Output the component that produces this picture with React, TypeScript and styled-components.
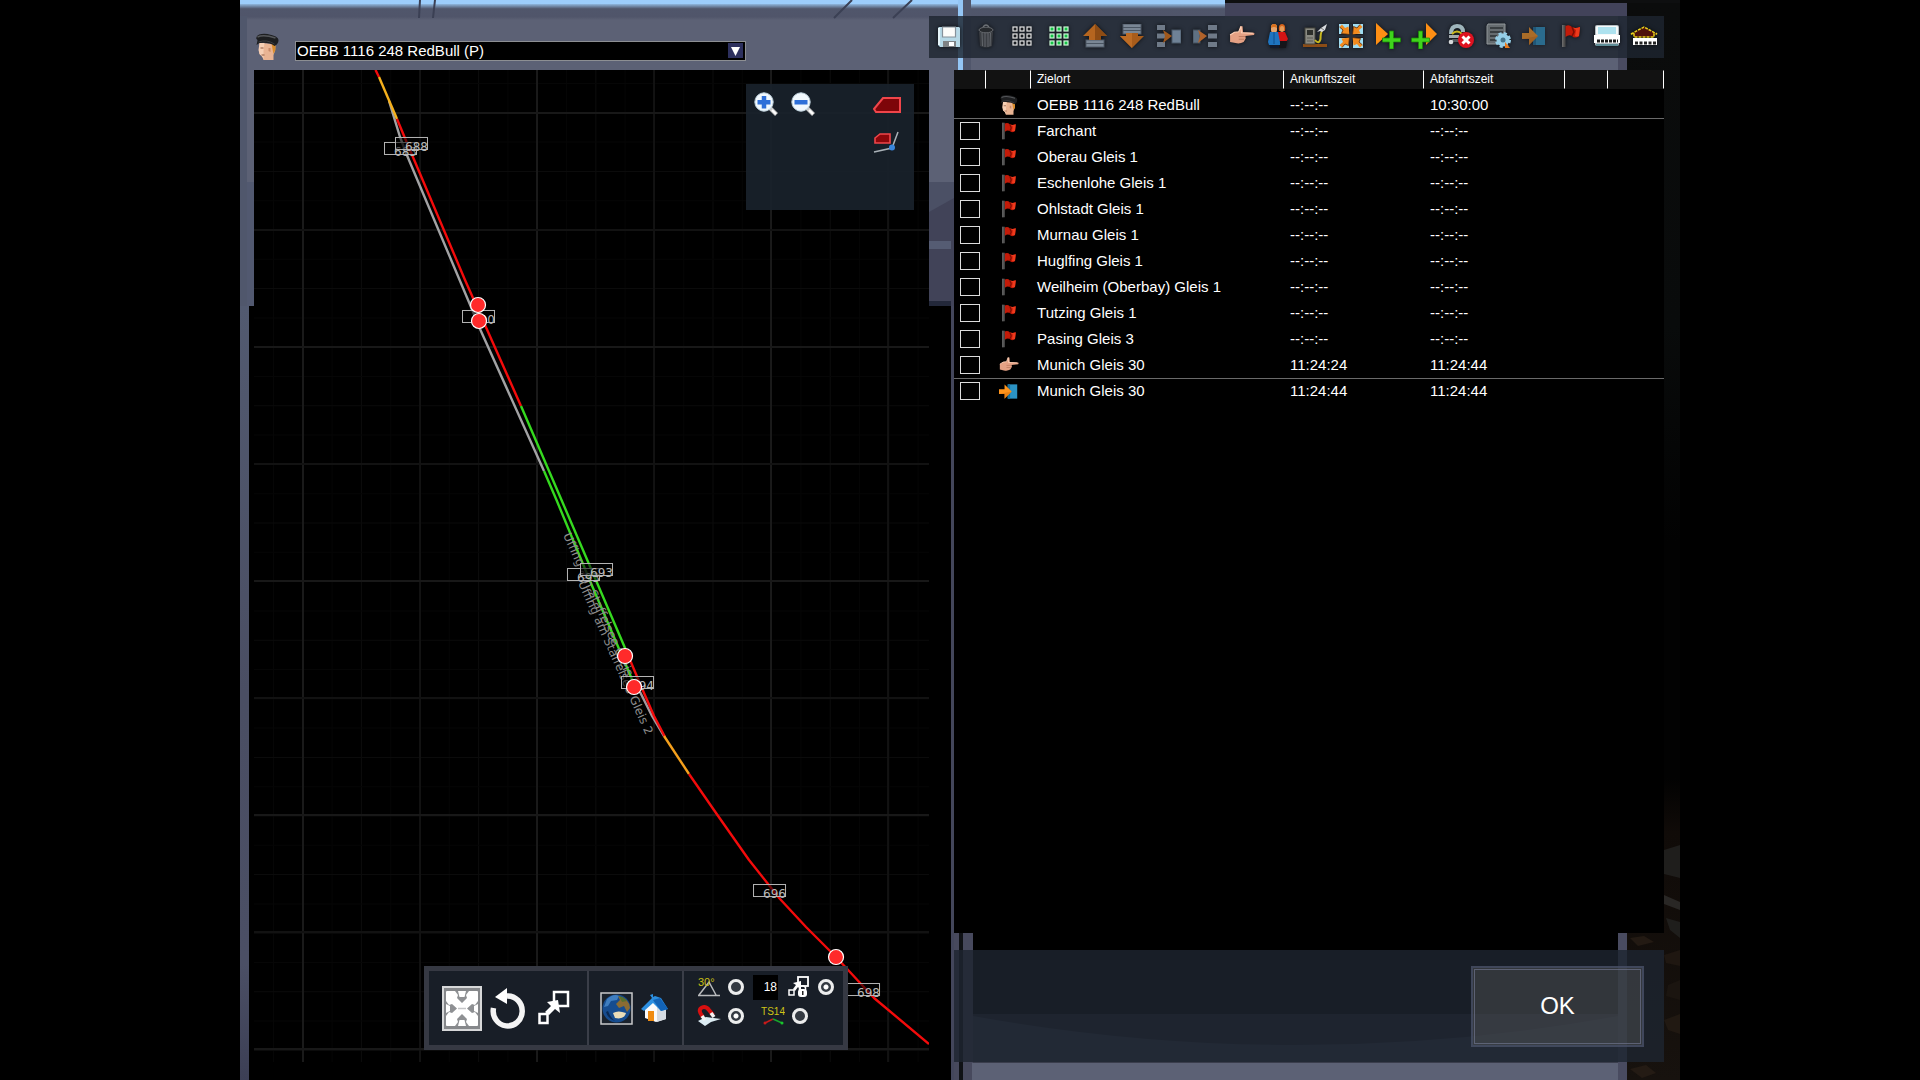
import React, { useState } from "react";
import styled, { createGlobalStyle, css } from "styled-components";

const sans = `"Liberation Sans", Arial, sans-serif`;
const glass = "rgba(29, 37, 48, 0.815)";

const GlobalStyle = createGlobalStyle`
  *, *::before, *::after { box-sizing: border-box; }
  html, body { margin: 0; padding: 0; background: #000; }
  body { font-family: ${sans}; color: #fff; }
  button, input, select { font: inherit; color: inherit; margin: 0; }
`;

/* ---------- shell ---------- */

const Page = styled.div`
  min-height: 100vh;
  display: grid;
  grid-template-columns: 1fr 6fr 1fr;
  background: #000;
`;

const Stage = styled.main`
  grid-column: 2;
  position: relative;
  isolation: isolate;
  display: grid;
  grid-template-columns: minmax(0, 15fr) minmax(0, 16fr);
  padding-right: 16px;
`;

const Backdrop = styled.svg`
  position: absolute;
  inset: 0;
  z-index: -1;
  width: 100%;
  height: 100%;
`;

const MapColumn = styled.section`
  display: flex;
  flex-direction: column;
  padding: 0 0 18px 14px;
`;

const PlanColumn = styled.section`
  display: flex;
  flex-direction: column;
  padding: 16px 0 18px;
`;

/* ---------- service picker ---------- */

const PickerBar = styled.header`
  height: 70px;
  display: flex;
  align-items: flex-end;
  gap: 14px;
  padding-bottom: 9px;
`;

const PickerBox = styled.label`
  flex: 0 1 451px;
  position: relative;
  display: block;
`;

const Picker = styled.select`
  appearance: none;
  display: block;
  width: 100%;
  height: 20px;
  padding: 0 20px 0 1px;
  border: 1px solid #8d8f93;
  border-radius: 0;
  background: #000;
  font-size: 15px;
  line-height: 18px;
`;

const PickerArrow = styled.svg`
  position: absolute;
  top: 2px;
  right: 3px;
  width: 15px;
  height: 15px;
  pointer-events: none;
`;

/* ---------- map ---------- */

const MapFrame = styled.div`
  position: relative;
  flex: 1;
  min-height: 480px;
  background: #000;
  overflow: hidden;
`;

const MapCanvas = styled.svg`
  position: absolute;
  inset: 0;
  width: 100%;
  height: 100%;
`;

const bareButton = css`
  display: grid;
  place-items: center;
  padding: 0;
  border: 0;
  background: none;
  cursor: pointer;
`;

const ZoomPanel = styled.div`
  position: absolute;
  top: 14px;
  right: 15px;
  width: 168px;
  height: 126px;
  display: flex;
  justify-content: space-between;
  padding: 6px 12px 5px 5px;
  background: rgba(26, 34, 44, 0.9);
`;

const ZoomGroup = styled.div<{ $vertical?: boolean }>`
  display: flex;
  flex-direction: ${(p) => (p.$vertical ? "column" : "row")};
  gap: 7px;
`;

const ZoomButton = styled.button`
  ${bareButton}
  width: 30px;
  height: 30px;
`;

const ToolPanel = styled.div`
  position: absolute;
  right: 12%;
  bottom: 12px;
  display: flex;
  height: 84px;
  border: 5px solid #363943;
  background: #181e27;
`;

const ToolSection = styled.div<{ $width: number; $gap: number }>`
  width: ${(p) => p.$width}px;
  display: flex;
  align-items: center;
  justify-content: center;
  gap: ${(p) => p.$gap}px;

  & + & {
    border-left: 2px solid #3a3e48;
  }
`;

const ToolButton = styled.button<{ $size: "large" | "small" }>`
  ${bareButton}
  width: ${(p) => (p.$size === "large" ? 40 : 33)}px;
  height: ${(p) => (p.$size === "large" ? 45 : 33)}px;
`;

const SnapSection = styled.div`
  width: 161px;
  display: flex;
  flex-direction: column;
  gap: 3px;
  padding: 3px 0 0 13px;
  border-left: 2px solid #3a3e48;
`;

const SnapRow = styled.div<{ $gap: number }>`
  display: flex;
  align-items: center;
  gap: ${(p) => p.$gap}px;
  height: 26px;
`;

const SnapOption = styled.label`
  display: flex;
  align-items: center;
  gap: 7px;
`;

const RoundToggle = styled.input`
  appearance: none;
  width: 16px;
  height: 16px;
  border: 3px solid #eceded;
  border-radius: 50%;
  background: #343a42;

  &:checked {
    background: radial-gradient(circle, #fff 0 2px, #343a42 3px);
  }
`;

const AngleField = styled.input`
  width: 25px;
  height: 25px;
  padding: 0 1px;
  border: 0;
  background: #000;
  font-size: 12px;
  text-align: right;
`;

/* ---------- timetable ---------- */

const ActionBar = styled.div`
  display: grid;
  grid-template-columns: repeat(20, 1fr);
  align-items: center;
  height: 42px;
  padding: 0 2px 2px;
  margin-bottom: 12px;
  background: ${glass};
`;

const ActionButton = styled.button<{ $dim?: boolean }>`
  ${bareButton}
  width: 100%;
  height: 28px;
  filter: drop-shadow(0 0 2px rgba(0, 0, 0, 0.7));
  opacity: ${(p) => (p.$dim ? 0.6 : 1)};
`;

const TimetablePane = styled.div`
  flex: 1;
  margin-left: 25px;
  background: #000;
`;

const Timetable = styled.table`
  width: 100%;
  table-layout: fixed;
  border-collapse: separate;
  border-spacing: 0;
  font-size: 15px;
`;

const HeadCell = styled.th`
  height: 19px;
  padding: 0 0 0 6px;
  border-right: 1px solid #fff;
  border-top: 1px solid #121212;
  border-bottom: 1px solid #121212;
  background: #121212;
  font-size: 12px;
  line-height: 17px;
  font-weight: 400;
  text-align: left;
`;

const Cell = styled.td`
  padding: 0 0 0 6px;
  line-height: 22px;
  white-space: nowrap;
`;

const IconCell = styled.td`
  padding: 0;
  text-align: center;
  line-height: 0;
`;

const StopRow = styled.tr<{ $ruled?: boolean; $lead?: boolean }>`
  height: ${(p) => (p.$lead ? 30 : 26)}px;

  & > td {
    border-bottom: ${(p) => (p.$ruled ? "1px solid #6a6a6a" : "0")};
    padding-top: ${(p) => (p.$lead ? 2 : 0)}px;
    padding-bottom: ${(p) => (p.$lead ? 0 : 2)}px;
  }
`;

const StopCheck = styled.input`
  appearance: none;
  display: block;
  width: 20px;
  height: 18px;
  border: 1px solid #dcdcdc;
  background: #000;

  &:checked {
    background: #d8d8d8;
  }
`;

const Footer = styled.footer`
  display: flex;
  align-items: center;
  justify-content: flex-end;
  height: 112px;
  margin: 17px 0 0 25px;
  padding-right: 20px;
  background: ${glass};
`;

const OkButton = styled.button`
  width: 173px;
  height: 81px;
  padding: 0;
  border: 2px solid rgba(70, 78, 104, 0.7);
  outline: 1px solid rgba(110, 116, 140, 0.7);
  outline-offset: -4px;
  background: rgba(96, 96, 98, 0.36);
  font-size: 24px;
  cursor: pointer;
`;

/* ---------- icons ---------- */

type IconProps = { size?: number; w?: number; h?: number; box?: string; children: React.ReactNode };
const Svg = ({ size = 24, w, h, box = "0 0 24 24", children }: IconProps) => (
  <svg width={w ?? size} height={h ?? size} viewBox={box} aria-hidden="true">
    {children}
  </svg>
);

const DriverIcon = ({ w, h }: { w: number; h: number }) => (
  <Svg w={w} h={h} box="0 0 24 28">
    <path d="M4 10 L20 11 L19.500 18 L18 22 L18 27 L8 27 L7 24 L4 21 Z" fill="#e9b493" />
    <path d="M4 10 L9 10 L8 18 L8 27 L7 24 L4 21 L3 17 Z" fill="#f6cfb4" />
    <path d="M16 10 L20 10 L20 17 L18 21 L17 16 Z" fill="#d98d2c" />
    <path d="M13 15 L15 15 L15 19 L13 18 Z" fill="#c98a68" />
    <path d="M5 15 H8 M6 22 H9" stroke="#8f5b42" strokeWidth="1" />
    <path d="M1 4 Q3 0 12 1 Q23 3 23 7 Q23 11 19 13 Q14 9 4 10 L1 12 Q2 8 2 7 Q0 6 1 4 Z" fill="#1d1e20" />
    <path d="M2 4 Q8 1 20 5" stroke="#55575a" strokeWidth="1.500" fill="none" />
    <path d="M3 9 Q11 6 19 11" stroke="#3c3e41" strokeWidth="1" fill="none" />
  </Svg>
);

const FlagIcon = ({ size = 24 }: { size?: number }) => (
  <Svg size={size}>
    <rect x="3" y="1" width="3.500" height="22" fill="#4b4b4b" />
    <rect x="3" y="1" width="1.500" height="22" fill="#696969" />
    <path d="M6.500 2 Q10 0 13 3 Q16 5 21 3 L20 12 Q16 15 13 12 Q10 10 6.500 13 Z" fill="#c41a08" />
    <path d="M13 3 Q16 5 21 3 L20 12 Q18 13 16 12 L17 6 Z" fill="#ee3a1c" />
    <path d="M13 3 L15 8 L13 12" stroke="#7c0e04" strokeWidth="1.500" fill="none" />
  </Svg>
);

const HandIcon = ({ size = 26 }: { size?: number }) => (
  <Svg size={size}>
    <path d="M1 11 L5 8.500 L9 8 L11 3 L12.500 3 L13 8.500 L23 9 Q24 10 23 11 L15 12 L15.500 14 L14.500 16 L13.500 17.500 Q10 19.500 6 18.500 L1 17.500 Z" fill="#e5a184" />
    <path d="M1 11 L5 8.500 L9 8 L11 3 L11.500 9 L22 9.500" stroke="#ffd2b8" strokeWidth="1" fill="none" />
    <path d="M9 12.500 H15 M9 15 H14" stroke="#b8765b" strokeWidth="0.800" />
  </Svg>
);

const ExitIcon = ({ size = 24 }: { size?: number }) => (
  <Svg size={size}>
    <rect x="11" y="3" width="12" height="18" fill="#2b93c4" />
    <rect x="11" y="3" width="3" height="18" fill="#1b6e9b" />
    <path d="M0 9 H7 V3 L16 12 L7 21 V15 H0 Z" fill="#ff941c" />
    <path d="M0 15 H7 V21 L16 12" fill="#d9700a" opacity="0.500" />
  </Svg>
);

const SaveIcon = () => (
  <Svg>
    <path d="M2 3 H22 L23 4 V23 H3 L1 21 V4 Z" fill="#b6d8e6" />
    <path d="M5.500 3 H18.500 V13 H5.500 Z" fill="#fcfcfa" stroke="#86919a" strokeWidth="1.200" />
    <rect x="1" y="4" width="2" height="17" fill="#e6f5fa" />
    <rect x="6" y="17" width="13" height="6" fill="#7f8284" />
    <rect x="12" y="18" width="5" height="4" fill="#fff" />
  </Svg>
);

const TrashIcon = () => (
  <Svg>
    <path d="M5 8 H19 L18 22 Q12 25 6 22 Z" fill="#3a3d42" />
    <path d="M8 9 L8.500 22 M11 9 V23 M14 9 V23 M16.500 9 L16 22" stroke="#63676c" strokeWidth="1" />
    <ellipse cx="12" cy="6" rx="7" ry="2.800" fill="#26292d" stroke="#66696e" strokeWidth="1" />
    <path d="M9 3 Q12 -1 15 3" stroke="#6d7176" strokeWidth="1.300" fill="none" />
  </Svg>
);

const GridIcon = ({ green }: { green?: boolean }) => (
  <Svg>
    {[3, 10, 17].map((y) =>
      [3, 10, 17].map((x) => (
        <rect
          key={`${x}-${y}`}
          x={x}
          y={y}
          width="4"
          height="4"
          fill={green ? "#15c445" : "#1a1d21"}
          stroke={green ? "#cdf7d8" : "#e5e5e5"}
          strokeWidth="1.200"
        />
      ))
    )}
  </Svg>
);

const MoveUpIcon = () => (
  <Svg>
    <rect x="3" y="16" width="18" height="7" fill="#7a8694" stroke="#505b68" />
    <path d="M3 19.500 H21" stroke="#4a5562" />
    <path d="M12 0 L24 12 H18 V16 H6 V12 H0 Z" fill="#b5651f" />
    <path d="M12 0 L24 12 H18 V16 H12 Z" fill="#8e4c14" />
  </Svg>
);

const MoveDownIcon = () => (
  <Svg>
    <rect x="3" y="0" width="18" height="10" fill="#7a8694" stroke="#505b68" />
    <path d="M3 3.500 H21 M3 6.500 H21" stroke="#4a5562" />
    <path d="M12 24 L24 12 H18 V9 H6 V12 H0 Z" fill="#a85c1b" />
    <path d="M12 24 L0 12 H6 V9 H12 Z" fill="#bd6c25" />
  </Svg>
);

const MergeIcon = () => (
  <Svg>
    {[1, 9.5, 18].map((y) => (
      <rect key={y} x="0" y={y} width="8" height="5" fill="#6f7a88" />
    ))}
    <rect x="15" y="6" width="9" height="13" fill="#6f8296" stroke="#4d5b6a" />
    <path d="M6 6 L15 12 L6 19 L8 12 Z" fill="#a0581c" />
  </Svg>
);

const SplitIcon = () => (
  <Svg>
    {[1, 9.5, 18].map((y) => (
      <rect key={y} x="15" y={y} width="9" height="5" fill="#6f7a88" />
    ))}
    <rect x="0" y="6" width="7" height="13" fill="#5f7183" stroke="#46525f" />
    <path d="M5 6 L14 12 L5 19 L7 12 Z" fill="#b0622a" />
  </Svg>
);

const PassengersIcon = () => (
  <Svg>
    <path d="M13 7 Q12 0 16 0 Q20 0 19 7 Z" fill="#d8641a" />
    <rect x="14" y="2" width="4" height="6" rx="2" fill="#e59c5a" />
    <path d="M12 8 H19 L22 15 L20 18 H12 Z" fill="#d21414" />
    <path d="M13 17 H21 L20 24 H13 Z" fill="#15151a" />
    <rect x="5" y="0" width="6" height="9" rx="3" fill="#e5a46c" />
    <path d="M5 4 Q5 0 8 0 Q11 0 11 4 Q8 2 5 4 Z" fill="#d9701c" />
    <path d="M4 8 H12 L14 18 V21 H3 L2 18 Z" fill="#1e74c0" />
    <path d="M8 8 V20" stroke="#0f4d8c" />
    <path d="M4 21 H13 V24 H4 Z" fill="#111a2e" />
  </Svg>
);

const FuelIcon = () => (
  <Svg w={26}>
    <rect x="0" y="20" width="24" height="3" fill="#8b4c16" />
    <rect x="2" y="4" width="10" height="16" fill="#8a8a82" stroke="#46463f" />
    <rect x="4" y="6" width="6" height="5" fill="#2d2f2b" />
    <path d="M4 14 H10 M4 17 H10" stroke="#5b5b54" />
    <path d="M12 16 Q16 21 17.500 15 Q17.500 9 19 7" stroke="#c8b820" strokeWidth="2" fill="none" />
    <path d="M14 8 L18 4 L24 0 L22 6 L19 8 L17 7 Z" fill="#d9dcdf" />
    <path d="M18 4 L21 6" stroke="#777" fill="none" />
  </Svg>
);

const ConvergeIcon = () => (
  <Svg>
    {[0, 90, 180, 270].map((r) => (
      <g key={r} transform={`rotate(${r} 12 12)`}>
        <rect x="0" y="0" width="10" height="10" fill="#9fdcf2" />
        <path d="M0.500 3 L3 0.500 L6 4 L9.500 2.500 L10.500 10.500 L2.500 9.500 L4 6 Z" fill="#f28a1e" />
        <path d="M10.500 10.500 L2.500 9.500 L4 6 L0.500 3" stroke="#6e3608" strokeWidth="0.900" fill="none" />
      </g>
    ))}
    <path d="M12 0 V24 M0 12 H24" stroke="#2a2f38" strokeWidth="2.500" />
  </Svg>
);

const Plus = ({ x, y }: { x: number; y: number }) => (
  <path d={`M${x - 2} ${y - 9} h4 v7 h7 v4 h-7 v7 h-4 v-7 h-7 v-4 h7 Z`} fill="#3fd41c" stroke="#1d8a0b" strokeWidth="0.800" />
);

const AddAfterIcon = () => (
  <Svg w={26} h={26} box="0 0 26 26">
    <path d="M1 0 L13 11 L1 22 Z" fill="#ff8f14" />
    <Plus x={16.5} y={17} />
  </Svg>
);

const AddBeforeIcon = () => (
  <Svg w={26} h={26} box="0 0 26 26">
    <path d="M15 0 L26 11 L15 22 Z" fill="#ff8f14" />
    <Plus x={9.5} y={17} />
  </Svg>
);

const UncoupleIcon = () => (
  <Svg w={26} h={26} box="0 0 26 26">
    <path d="M3 11 Q3 3 9 3 Q15 3 15 9" stroke="#9eb4bb" strokeWidth="4" fill="none" />
    <path d="M4 11 Q9 6 14 11" stroke="#c9b51e" strokeWidth="2" fill="none" />
    <rect x="1" y="12" width="10" height="3" fill="#a3a9ad" />
    <rect x="4" y="16" width="7" height="3" fill="#54595e" />
    <circle cx="3" cy="19" r="2.300" fill="#d6d9db" />
    <circle cx="18" cy="17" r="8" fill="#de1220" />
    <path d="M14.500 13.500 L21.500 20.500 M21.500 13.500 L14.500 20.500" stroke="#fff" strokeWidth="3" />
  </Svg>
);

const SettingsIcon = () => (
  <Svg w={26} h={26} box="0 0 26 26">
    <path d="M3 1 H20 V21 H2 V3 Z" fill="#666c70" stroke="#92989b" />
    <path d="M5 5 H18 M5 9 H18 M5 13 H12 M5 17 H12" stroke="#2c3033" strokeWidth="1.500" />
    <circle cx="18" cy="17" r="6.500" fill="#95cfe8" stroke="#95cfe8" strokeWidth="3" strokeDasharray="3 2.100" />
    <circle cx="18" cy="17" r="2.500" fill="#45758b" />
    <path d="M20 19 L25 25 H20 Z" fill="#ed7b1a" />
  </Svg>
);

const TrainIcon = () => (
  <Svg w={26} h={24} box="0 0 26 24">
    <rect x="1" y="1" width="24" height="21" rx="2" fill="#b5bec3" />
    <rect x="2" y="2" width="22" height="9" rx="1" fill="#f6f9fa" />
    <rect x="4" y="3" width="18" height="7" fill="#aee2ef" />
    <rect x="0" y="11" width="26" height="8" fill="#fff" />
    <path d="M3 17 H24" stroke="#1c1c1c" strokeWidth="3" strokeDasharray="3 1" />
    <rect x="2" y="20" width="22" height="2" fill="#5f8d97" />
  </Svg>
);

const DepotIcon = () => (
  <Svg w={28} h={24} box="0 0 28 24">
    <path d="M1 10 L14 3 L27 10 H24 V13 H4 V10 Z" fill="#4f110b" stroke="#e9cf1b" strokeWidth="1.500" strokeDasharray="3 1" />
    <rect x="3" y="14" width="24" height="7" fill="#fff" />
    <path d="M5 19 H26" stroke="#222" strokeWidth="3" strokeDasharray="3 1.500" />
  </Svg>
);

const Magnifier = ({ plus }: { plus?: boolean }) => (
  <Svg size={26} box="0 0 26 26">
    <path d="M17 16 L23.500 22.500" stroke="#c8c8c8" strokeWidth="4" />
    <path d="M19 18 L23 22" stroke="#fff" strokeWidth="2" />
    <circle cx="11" cy="10" r="9.200" fill="#f1f8fd" stroke="#bdd0dc" strokeWidth="1" />
    <rect x="4.500" y="8" width="13" height="4.500" fill="#2e6fd8" />
    {plus && <rect x="8.750" y="4" width="4.500" height="12.500" fill="#2e6fd8" />}
  </Svg>
);

const LocoIcon = () => (
  <Svg w={28} h={18} box="0 0 28 18">
    <path d="M1 13 L10 2 H27 V16 H3 Z" fill="#7d0509" stroke="#f0454a" strokeWidth="2" />
  </Svg>
);

const LocoNodeIcon = () => (
  <Svg w={28} h={24} box="0 0 28 24">
    <path d="M2 8 L7 4 H17 V13 H2 Z" fill="#8c060a" stroke="#f0454a" strokeWidth="1.600" />
    <path d="M1 22 L19 18 L25 2" stroke="#aab2b8" strokeWidth="1.500" fill="none" />
    <circle cx="19" cy="17.500" r="3" fill="#3a86dc" />
  </Svg>
);

const PanIcon = () => (
  <Svg w={40} h={45} box="0 0 40 45">
    <rect x="1" y="1" width="38" height="43" fill="#86888b" stroke="#d7d8d9" strokeWidth="2" />
    <rect x="4" y="5" width="32" height="35" rx="1" fill="#fff" />
    <g fill="#8e9093">
      <path d="M20 5 L13 5 L16 9 L15 12 L20 17 L25 12 L24 9 L27 5 Z" />
      <path d="M20 40 L13 40 L16 36 L15 33 L20 28 L25 33 L24 36 L27 40 Z" />
      <path d="M4 15 L7 19 L10 18 L15 22.500 L10 27 L7 26 L4 30 Z" />
      <path d="M36 15 L33 19 L30 18 L25 22.500 L30 27 L33 26 L36 30 Z" />
    </g>
    <path d="M16 5 L17.500 11 H22.500 L24 5 M16 40 L17.500 34 H22.500 L24 40" fill="#fff" />
    <path d="M4 18 L8 20 V25 L4 27 Z M36 18 L32 20 V25 L36 27 Z" fill="#fff" />
    <path d="M16 22.500 H24" stroke="#c5c6c8" strokeWidth="1.500" />
  </Svg>
);

const RotateIcon = () => (
  <Svg w={36} h={42} box="0 0 36 42">
    <path d="M3.500 21 A14.500 15 0 1 0 17 9" stroke="#f4f4f4" strokeWidth="5.500" fill="none" />
    <path d="M17 1 V17 L5 10 Z" fill="#fff" />
  </Svg>
);

const ScaleIcon = () => (
  <Svg w={32} h={36} box="0 0 32 36">
    <rect x="16" y="2" width="14" height="14" fill="none" stroke="#fff" strokeWidth="2.500" />
    <rect x="1.500" y="24" width="8" height="9" fill="none" stroke="#fff" strokeWidth="2.500" />
    <path d="M7 22 L13 16 L9 12 L20 10 L22 23 L17 19 L11 25 Z" fill="#fff" />
  </Svg>
);

const GlobeIcon = () => (
  <Svg size={33} box="0 0 33 33">
    <rect x="1" y="1" width="31" height="31" fill="#1a222c" stroke="#c8c9ca" strokeWidth="1.500" />
    <circle cx="16.500" cy="16.500" r="14" fill="#164c8f" />
    <path d="M7 7 Q14 1 19 4 L17 8 L11 9 L8 14 L4 15 Z" fill="#3f7ec0" />
    <path d="M18 4 Q29 6 30 16 L27 20 L24 14 L19 16 L16 12 L20 8 Z" fill="#8b6c33" />
    <path d="M19 4 Q24 5 27 9 L22 10 Z" fill="#57702f" />
    <path d="M13 21 Q18 18 26 21 Q24 28 15 26 Z" fill="#e9dcb8" />
    <path d="M6 20 Q8 27 15 29 Q10 25 8 19 Z" fill="#0a2a55" />
  </Svg>
);

const HouseIcon = () => (
  <Svg size={28} box="0 0 28 28">
    <path d="M4 13 L12 5 L25 14 V25 L15 28 L4 24 Z" fill="#fbfbfb" />
    <path d="M16 13 L25 13 V25 L16 28 Z" fill="#d5dbe2" />
    <rect x="7" y="17" width="6" height="10" fill="#f08c12" />
    <path d="M0 15 L11 4 L9 1 L12 0 V3 L14 2 L20 4 L27 15 L20 17 L12 9 L3 17 Z" fill="#2c8fe0" />
    <path d="M12 6 L20 17 L27 15 L19 4 Z" fill="#1263b6" />
  </Svg>
);

const AngleIcon = () => (
  <Svg w={24} h={22} box="0 0 24 22">
    <path d="M2 19 L12 6 L19 19 M1 19.500 H23" stroke="#b9bbbd" strokeWidth="1.500" fill="none" />
    <text x="1" y="10" fontFamily={sans} fontSize="11" fill="#c9bf15">30°</text>
  </Svg>
);

const MagnetIcon = () => (
  <Svg w={24} h={22} box="0 0 24 22">
    <path d="M1 16 L9 12 L24 14 L14 17 L8 21 Z" fill="#dcecf3" />
    <path d="M6 12 Q0 5 5 2.500 Q9 1 12 5 L16 10" stroke="#d81010" strokeWidth="4" fill="none" />
    <path d="M5 11 L8 15 M14 8 L17 12" stroke="#f3f3f3" strokeWidth="3.500" />
  </Svg>
);

const ScaleLockIcon = () => (
  <Svg w={24} h={24} box="0 0 24 24">
    <rect x="11" y="2" width="10" height="9" fill="none" stroke="#fff" strokeWidth="1.800" />
    <rect x="2" y="15" width="5" height="5" fill="none" stroke="#fff" strokeWidth="1.500" />
    <path d="M6 14 L9 10 L6 8 L14 6 L14 15 L11 12 L8 16 Z" fill="#fff" />
    <path d="M12.500 15 V12.500 Q15.500 9 18.500 12.500 V15" stroke="#fff" strokeWidth="1.500" fill="none" />
    <rect x="11" y="14" width="9" height="8" rx="3" fill="#fff" />
    <rect x="15" y="16" width="1.500" height="4" fill="#222" />
  </Svg>
);

const TrackToolIcon = () => (
  <Svg w={24} h={24} box="0 0 24 24">
    <text x="12" y="11" textAnchor="middle" fontFamily={sans} fontSize="10" fill="#cfc316">TS14</text>
    <path d="M12 15 L4 19" stroke="#c81a1a" strokeWidth="1.500" />
    <path d="M12 15 L21 19" stroke="#18a52c" strokeWidth="1.500" />
    <circle cx="4" cy="19" r="1.500" fill="#c81a1a" />
    <circle cx="21" cy="19" r="1.500" fill="#18c52c" />
  </Svg>
);

/* ---------- data ---------- */

const actions: { label: string; icon: React.ReactNode; dim?: boolean }[] = [
  { label: "Speichern", icon: <SaveIcon /> },
  { label: "Löschen", icon: <TrashIcon /> },
  { label: "Alle abwählen", icon: <GridIcon /> },
  { label: "Alle auswählen", icon: <GridIcon green /> },
  { label: "Nach oben", icon: <MoveUpIcon /> },
  { label: "Nach unten", icon: <MoveDownIcon /> },
  { label: "Zusammenführen", icon: <MergeIcon /> },
  { label: "Trennen", icon: <SplitIcon /> },
  { label: "Halt", icon: <HandIcon /> },
  { label: "Fahrgäste", icon: <PassengersIcon /> },
  { label: "Tanken", icon: <FuelIcon /> },
  { label: "Kuppeln", icon: <ConvergeIcon /> },
  { label: "Danach einfügen", icon: <AddAfterIcon /> },
  { label: "Davor einfügen", icon: <AddBeforeIcon /> },
  { label: "Abkuppeln", icon: <UncoupleIcon /> },
  { label: "Einstellungen", icon: <SettingsIcon /> },
  { label: "Endziel", icon: <ExitIcon />, dim: true },
  { label: "Wegpunkt", icon: <FlagIcon /> },
  { label: "Zug", icon: <TrainIcon /> },
  { label: "Depot", icon: <DepotIcon /> },
];

const NONE = "--:--:--";
type Kind = "driver" | "flag" | "hand" | "exit";
const stops: { kind: Kind; name: string; arrive: string; depart: string; ruled?: boolean }[] = [
  { kind: "driver", name: "OEBB 1116 248 RedBull", arrive: NONE, depart: "10:30:00", ruled: true },
  { kind: "flag", name: "Farchant", arrive: NONE, depart: NONE },
  { kind: "flag", name: "Oberau Gleis 1", arrive: NONE, depart: NONE },
  { kind: "flag", name: "Eschenlohe Gleis 1", arrive: NONE, depart: NONE },
  { kind: "flag", name: "Ohlstadt Gleis 1", arrive: NONE, depart: NONE },
  { kind: "flag", name: "Murnau Gleis 1", arrive: NONE, depart: NONE },
  { kind: "flag", name: "Huglfing Gleis 1", arrive: NONE, depart: NONE },
  { kind: "flag", name: "Weilheim (Oberbay) Gleis 1", arrive: NONE, depart: NONE },
  { kind: "flag", name: "Tutzing Gleis 1", arrive: NONE, depart: NONE },
  { kind: "flag", name: "Pasing Gleis 3", arrive: NONE, depart: NONE },
  { kind: "hand", name: "Munich Gleis 30", arrive: "11:24:24", depart: "11:24:44", ruled: true },
  { kind: "exit", name: "Munich Gleis 30", arrive: "11:24:44", depart: "11:24:44" },
];

const stopIcon: Record<Kind, React.ReactNode> = {
  driver: <DriverIcon w={18} h={22} />,
  flag: <FlagIcon size={18} />,
  hand: <HandIcon size={20} />,
  exit: <ExitIcon size={19} />,
};

const signs = [
  { x: 384, y: 142, n: "683" },
  { x: 395, y: 137, n: "688" },
  { x: 462, y: 310, n: "690" },
  { x: 567, y: 568, n: "693" },
  { x: 580, y: 563, n: "693" },
  { x: 621, y: 676, n: "694" },
  { x: 753, y: 884, n: "696" },
  { x: 847, y: 983, n: "698" },
];

const signals = [
  [478, 305],
  [479, 321],
  [625, 656],
  [634, 687],
  [836, 957],
];

const range = (n: number) => Array.from({ length: n }, (_, i) => i);

/* ---------- drawings ---------- */

const Scene = () => (
  <Backdrop viewBox="0 0 1440 1080" preserveAspectRatio="none" aria-hidden="true">
    <defs>
      <linearGradient id="beam" x1="0" y1="0" x2="0" y2="1">
        <stop offset="0" stopColor="#8fb8e0" />
        <stop offset="0.300" stopColor="#50566b" />
        <stop offset="0.800" stopColor="#50556a" />
        <stop offset="1" stopColor="#5c6175" />
      </linearGradient>
      <linearGradient id="post" x1="0" y1="0" x2="0" y2="1">
        <stop offset="0" stopColor="#525a70" />
        <stop offset="0.500" stopColor="#4a4e63" />
        <stop offset="0.850" stopColor="#4b4f65" />
        <stop offset="1" stopColor="#3c3f55" />
      </linearGradient>
      <linearGradient id="night" x1="0" y1="0" x2="0" y2="1">
        <stop offset="0" stopColor="#0b0c0c" />
        <stop offset="0.300" stopColor="#090b0b" />
        <stop offset="0.500" stopColor="#020202" />
        <stop offset="0.720" stopColor="#020202" />
        <stop offset="0.770" stopColor="#100b08" />
        <stop offset="1" stopColor="#17120e" />
      </linearGradient>
    </defs>
    <rect width="1440" height="1080" fill="#5c6175" />
    <rect width="1440" height="4" fill="#9ccdfb" />
    <rect y="4" width="985" height="16" fill="url(#beam)" />
    <path d="M985 0 H1387 V16 H985 Z" fill="#42435a" />
    <path d="M985 0 H1440 V3 H985 Z" fill="#0e0f10" />
    <path d="M180 0 L179 18 M195 0 L193 18 M612 0 L594 18 M672 0 L653 18" stroke="#3b4054" strokeWidth="2" />
    <rect y="16" width="7" height="290" fill="#50576c" />
    <rect x="7" y="182" width="7" height="124" fill="#525970" />
    <rect x="689" y="182" width="25" height="124" fill="#4b5065" />
    <path d="M689 212 L714 198 V306 H689 Z" fill="#414358" />
    <rect x="689" y="241" width="22" height="8" fill="#555c73" />
    <rect x="689" y="301" width="22" height="6" fill="#23283a" />
    <rect y="306" width="9" height="774" fill="url(#post)" />
    <rect x="9" y="306" width="702" height="774" fill="#000" />
    <rect x="711" y="306" width="3" height="774" fill="#43465b" />
    <rect x="718" y="0" width="5" height="70" fill="#94c6f5" />
    <rect x="723" y="0" width="8" height="70" fill="#50566b" />
    <rect x="714" y="933" width="20" height="147" fill="#47495d" />
    <rect x="719" y="933" width="4" height="147" fill="#101216" />
    <rect x="733" y="900" width="645" height="150" fill="#000" />
    <rect x="733" y="1014" width="645" height="50" fill="#20232f" />
    <path d="M733 1016 Q1055 1074 1378 1016 V1064 H733 Z" fill="#3a3d4c" />
    <rect x="732" y="1063" width="646" height="17" fill="#5c6175" />
    <rect x="1378" y="16" width="9" height="1064" fill="#494b60" />
    <rect x="1387" y="3" width="53" height="1077" fill="url(#night)" />
    <g fill="#1f1e1c">
      <path d="M1424 850 L1440 845 V878 L1424 874 Z" />
      <path d="M1424 895 L1440 902 V910 L1424 904 Z" fill="#292725" />
      <path d="M1426 918 L1440 922 V938 L1430 930 Z" />
      <path d="M1390 938 L1404 936 L1414 942 L1398 946 Z" fill="#231a13" />
      <path d="M1424 955 L1440 950 V966 L1426 963 Z" fill="#1f1711" />
      <path d="M1428 985 L1440 980 V1000 L1426 996 Z" fill="#1b1510" />
      <path d="M1424 1020 L1440 1014 V1034 L1428 1030 Z" fill="#211912" />
      <path d="M1390 1069 L1406 1065 L1416 1073 L1402 1078 Z" fill="#241b14" />
    </g>
  </Backdrop>
);

const TrackMap = () => (
  <MapCanvas viewBox="254 70 675 992" preserveAspectRatio="xMidYMid slice" role="img" aria-label="Streckenplan">
    <g fill="none" strokeWidth="1">
      {range(24).map((i) => (
        <path key={`v${i}`} d={`M${273.5 + i * 29.3} 70 V1062`} stroke={i % 2 ? "#0d0d0d" : "#060606"} />
      ))}
      {range(35).map((i) => (
        <path key={`h${i}`} d={`M254 ${83.5 + i * 29.3} H929`} stroke={i % 2 ? "#0b0b0b" : "#060606"} />
      ))}
    </g>
    <g fill="none" strokeWidth="2">
      {range(6).map((i) => (
        <path key={`V${i}`} d={`M${303 + i * 117} 70 V1062`} stroke={i % 2 ? "#121212" : "#1a1a1a"} />
      ))}
      {range(9).map((i) => (
        <path key={`H${i}`} d={`M254 ${113 + i * 117} H929`} stroke={i % 2 ? "#121212" : "#181818"} />
      ))}
    </g>
    <g fill="none" strokeWidth="2.400" strokeLinejoin="round">
      <path d="M389 101 L400 137 L406 153 L471 307 L480 329 L544 471" stroke="#a2a2a4" />
      <path d="M640 692 L652 716 L664 736" stroke="#a2979c" />
      <path d="M375.500 70 L379 77" stroke="#f30b0b" />
      <path d="M379 77 L397 119" stroke="#f5b01c" />
      <path d="M397 119 L407 143 L465 280 L521 406" stroke="#f30b0b" />
      <path d="M521 406 L561.500 500 L628 655" stroke="#35d91f" />
      <path d="M544 471 L556.500 500 L590 581 L634 684" stroke="#35d91f" />
      <path d="M627 653 L644 693 L654 716 L665 737" stroke="#f30b0b" />
      <path d="M664 736 L689 774" stroke="#f5a01c" />
      <path d="M689 774 L716 813 L749 860 L780 899 L806 927 L836 957 L874 998 L929 1044" stroke="#f30b0b" />
    </g>
    <g fontFamily={`"DejaVu Sans", Verdana, sans-serif`} fontSize="12">
      <g fill="#8d8d8d">
        <text transform="translate(563 535) rotate(66)">Uffing am Staffelsee Gleis 1</text>
        <text transform="translate(578 583) rotate(66)">Uffing am Staffelsee Gleis 2</text>
      </g>
      {signs.map((s, i) => (
        <g key={i}>
          <rect x={s.x + 0.5} y={s.y + 0.5} width="32" height="12" fill="#000" fillOpacity="0.550" stroke="#b4b4b4" />
          <text x={s.x + 10} y={s.y + 14} fill="#b9b9b9">{s.n}</text>
        </g>
      ))}
    </g>
    {signals.map(([x, y]) => (
      <circle key={`${x}-${y}`} cx={x} cy={y} r="7.500" fill="#ff2a2a" stroke="#fff" strokeWidth="1.200" />
    ))}
  </MapCanvas>
);

/* ---------- screen ---------- */

export default function App() {
  const [angle, setAngle] = useState("18");

  return (
    <>
      <GlobalStyle />
      <Page>
        <Stage>
          <Scene />

          <MapColumn>
            <PickerBar>
              <DriverIcon w={27} h={28} />
              <PickerBox>
                <Picker aria-label="Dienst">
                  <option>OEBB 1116 248 RedBull (P)</option>
                </Picker>
                <PickerArrow viewBox="0 0 15 15" aria-hidden="true">
                  <rect width="15" height="15" fill="#2d305e" />
                  <path d="M3 4 H12 L7.500 13 Z" fill="#fff" />
                </PickerArrow>
              </PickerBox>
            </PickerBar>

            <MapFrame>
              <TrackMap />
              <ZoomPanel>
                <ZoomGroup>
                  <ZoomButton aria-label="Vergrößern"><Magnifier plus /></ZoomButton>
                  <ZoomButton aria-label="Verkleinern"><Magnifier /></ZoomButton>
                </ZoomGroup>
                <ZoomGroup $vertical>
                  <ZoomButton aria-label="Zug zentrieren"><LocoIcon /></ZoomButton>
                  <ZoomButton aria-label="Zug folgen"><LocoNodeIcon /></ZoomButton>
                </ZoomGroup>
              </ZoomPanel>

              <ToolPanel>
                <ToolSection $width={158} $gap={6}>
                  <ToolButton $size="large" aria-label="Verschieben"><PanIcon /></ToolButton>
                  <ToolButton $size="large" aria-label="Drehen"><RotateIcon /></ToolButton>
                  <ToolButton $size="large" aria-label="Skalieren"><ScaleIcon /></ToolButton>
                </ToolSection>
                <ToolSection $width={95} $gap={5}>
                  <ToolButton $size="small" aria-label="Welt"><GlobeIcon /></ToolButton>
                  <ToolButton $size="small" aria-label="Startpunkt"><HouseIcon /></ToolButton>
                </ToolSection>
                <SnapSection>
                  <SnapRow $gap={9}>
                    <SnapOption>
                      <AngleIcon />
                      <RoundToggle type="checkbox" aria-label="Winkelraster" />
                    </SnapOption>
                    <AngleField aria-label="Winkel" value={angle} onChange={(e) => setAngle(e.target.value)} />
                    <SnapOption>
                      <ScaleLockIcon />
                      <RoundToggle type="checkbox" aria-label="Skalierung sperren" defaultChecked />
                    </SnapOption>
                  </SnapRow>
                  <SnapRow $gap={17}>
                    <SnapOption>
                      <MagnetIcon />
                      <RoundToggle type="checkbox" aria-label="Einrasten" defaultChecked />
                    </SnapOption>
                    <SnapOption>
                      <TrackToolIcon />
                      <RoundToggle type="checkbox" aria-label="Gleiswerkzeug" />
                    </SnapOption>
                  </SnapRow>
                </SnapSection>
              </ToolPanel>
            </MapFrame>
          </MapColumn>

          <PlanColumn>
            <ActionBar>
              {actions.map((a) => (
                <ActionButton key={a.label} aria-label={a.label} $dim={a.dim}>
                  {a.icon}
                </ActionButton>
              ))}
            </ActionBar>

            <TimetablePane>
              <Timetable>
                <colgroup>
                  <col width="32" />
                  <col width="45" />
                  <col />
                  <col width="140" />
                  <col width="141" />
                  <col width="43" />
                  <col width="56" />
                </colgroup>
                <thead>
                  <tr>
                    <HeadCell />
                    <HeadCell />
                    <HeadCell>Zielort</HeadCell>
                    <HeadCell>Ankunftszeit</HeadCell>
                    <HeadCell>Abfahrtszeit</HeadCell>
                    <HeadCell />
                    <HeadCell />
                  </tr>
                </thead>
                <tbody>
                  {stops.map((s, i) => (
                    <StopRow key={i} $ruled={s.ruled} $lead={s.kind === "driver"}>
                      <Cell>{s.kind !== "driver" && <StopCheck type="checkbox" aria-label={s.name} />}</Cell>
                      <IconCell>{stopIcon[s.kind]}</IconCell>
                      <Cell>{s.name}</Cell>
                      <Cell>{s.arrive}</Cell>
                      <Cell>{s.depart}</Cell>
                      <Cell />
                      <Cell />
                    </StopRow>
                  ))}
                </tbody>
              </Timetable>
            </TimetablePane>

            <Footer>
              <OkButton>OK</OkButton>
            </Footer>
          </PlanColumn>
        </Stage>
      </Page>
    </>
  );
}
